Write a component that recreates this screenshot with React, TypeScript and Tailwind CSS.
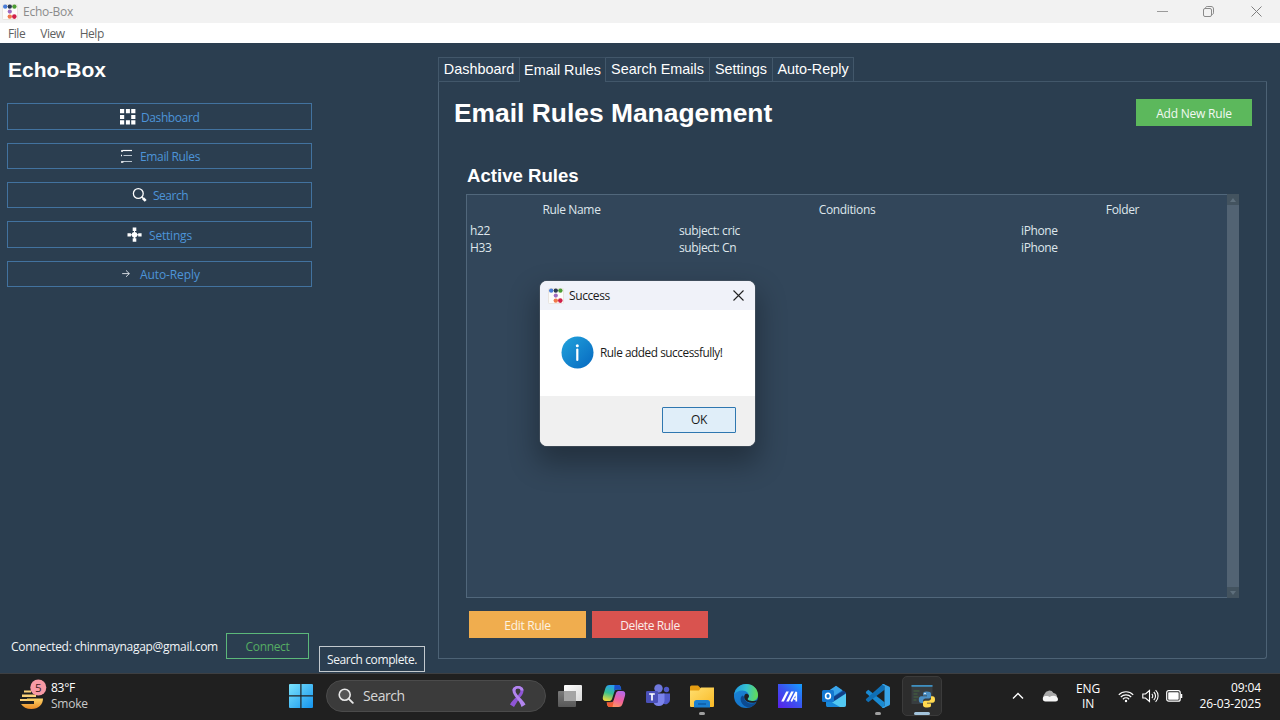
import React from "react";

const UI = "font-['Open_Sans','Noto_Sans',sans-serif]";
const ARIAL = "font-['Liberation_Sans',Arial,sans-serif]";

function AppIcon() {
  return (
    <svg width="16" height="16" viewBox="0 0 16 16" className="block shrink-0">
      <rect x="0.5" y="0.5" width="15" height="15" rx="1" fill="#fdfcfa" stroke="#e4dfda" strokeWidth="0.8" />
      <circle cx="3.2" cy="2.6" r="2.2" fill="#4a7dd8" />
      <circle cx="7.8" cy="2.6" r="2.2" fill="#2b3a50" />
      <circle cx="12.4" cy="2.6" r="2.2" fill="#4d9c34" />
      <circle cx="7.8" cy="7.6" r="2.1" fill="#a06cc0" />
      <circle cx="7.8" cy="12.6" r="2.2" fill="#f0784a" />
      <circle cx="12.3" cy="12.6" r="2.3" fill="#d0204a" />
    </svg>
  );
}

const GridIcon = (
  <svg width="16" height="16" viewBox="0 0 16 16" fill="#fff" className="block">
    <path d="M0 0h4.200v4.200H0zM5.900 0h4v4.200h-4zM11.200 0h4.200v4.200h-4.200zM0 5.900h4.200v4H0zM11.200 5.900h4.200v4h-4.200zM0 11.200h4.200v4.200H0zM5.900 11.200h4v4.200h-4zM11.200 11.200h4.200v4.200h-4.200z" />
  </svg>
);
const ListIcon = (
  <svg width="16" height="16" viewBox="0 0 16 16" className="block">
    <path d="M2.500 2.500h9.500" stroke="#fff" strokeWidth="1.200" />
    <path d="M3.500 7.500h8.500M2.500 13.500h9.500" stroke="#b9c4ce" strokeWidth="1" />
    <path d="M1 3h2M1 7.500h1M1 14h2.400" stroke="#fff" strokeWidth="1.600" />
  </svg>
);
const SearchIcon = (
  <svg width="16" height="16" viewBox="0 0 16 16" fill="none" stroke="#fff" className="block">
    <circle cx="6.300" cy="6.500" r="4.900" strokeWidth="1.300" />
    <path d="M9.600 10l1.600 1.400" strokeWidth="1.400" />
    <path d="M11 11.200l2.700 2.700" strokeWidth="2.700" />
  </svg>
);
const SettingsIcon = (
  <svg width="16" height="16" viewBox="0 0 16 16" fill="#fff" className="block">
    <circle cx="7.500" cy="7.700" r="2.800" />
    <path d="M5.700.6h3.600v3.500H5.700zM5.700 11.200h3.600v3.500H5.700zM.5 6.200h3.400v3.200H.5zM11.200 6.200h3.400v3.200h-3.400zM7 3.500h1v8H7zM3.300 7.200h8v1h-8z" />
  </svg>
);
const ArrowIcon = (
  <svg width="16" height="16" viewBox="0 0 16 16" fill="none" stroke="#e4e9ee" className="block">
    <path d="M2.200 7.600h7.200M6 4.400l3.300 3.200L6 10.800" strokeWidth="0.900" />
  </svg>
);

const nav = [
  { label: "Dashboard", icon: GridIcon, cls: "h-[27px] pl-[112px] gap-[5px]", tr: "tracking-[-0.4px]" },
  { label: "Email Rules", icon: ListIcon, cls: "h-[26px] pl-[112px] gap-[4px]", tr: "tracking-[-0.35px]" },
  { label: "Search", icon: SearchIcon, cls: "h-[26px] pl-[124px] gap-[5px]", tr: "tracking-[-0.5px]" },
  { label: "Settings", icon: SettingsIcon, cls: "h-[27px] pl-[119px] gap-[6px]", tr: "tracking-[-0.2px]" },
  { label: "Auto-Reply", icon: ArrowIcon, cls: "h-[26px] pl-[112px] gap-[4px]", tr: "tracking-[-0.1px]" },
];

function Sidebar() {
  return (
    <aside className="flex w-[438px] shrink-0 flex-col pl-[7px]">
      <h1 className={`mt-[14px] h-[26px] pl-px text-[21px] leading-[26px] font-bold text-white ${ARIAL}`}>Echo-Box</h1>
      <nav className="mt-[20px] flex flex-col gap-[13px]">
        {nav.map((n) => (
          <button key={n.label} className={`flex w-[305px] items-center border border-[#42729f] text-[12px] leading-[16px] text-[#4d94d8] ${n.cls}`}>
            {n.icon}
            <span className={`pt-[2px] ${n.tr}`}>{n.label}</span>
          </button>
        ))}
      </nav>
      <div className="mt-auto flex h-[40px] items-start">
        <span className="w-[219px] pt-[5px] pl-[4px] text-[12px] leading-[17px] tracking-[-0.3px] whitespace-nowrap text-[#f2f5f7]">
          Connected: chinmaynagap@gmail.com
        </span>
        <button className="h-[26px] w-[83px] border border-[#5cb87a] text-[12px] leading-[17px] tracking-[-0.35px] text-[#55ad63]">Connect</button>
        <div className="mt-[13px] ml-[10px] flex h-[26px] w-[106px] items-center justify-center border border-[#c3c9ce] text-[12px] leading-[17px] tracking-[-0.4px] whitespace-nowrap text-[#f2f5f7]">
          Search complete.
        </div>
      </div>
    </aside>
  );
}

const tabs = [
  { label: "Dashboard", w: "w-[82px]", active: false },
  { label: "Email Rules", w: "w-[86px]", active: true },
  { label: "Search Emails", w: "w-[104px]", active: false },
  { label: "Settings", w: "w-[63px]", active: false },
  { label: "Auto-Reply", w: "w-[81px]", active: false },
];

function RulesPanel() {
  return (
    <main className="flex w-[829px] flex-col pt-[14px]">
      <div className={`flex h-[25px] text-[14.400px] text-white ${ARIAL}`}>
        {tabs.map((t) => (
          <div
            key={t.label}
            className={`flex items-center justify-center pt-px whitespace-nowrap ${t.w} ${
              t.active ? "border-t border-r border-t-[#3b4f62] border-r-[#42576a]" : "border-t border-r border-b border-[#42576a] bg-[#2d4154] first:border-l"
            }`}
          >
            {t.label}
          </div>
        ))}
        <div className="flex-1 border-b border-[#42576a]" />
      </div>
      <section className="flex h-[577px] flex-col rounded-br-[3px] border-x border-b border-[#4d6275]">
        <header className="flex h-[61px] items-start justify-between pt-[17px] pr-[14px] pl-[15px]">
          <h2 className={`text-[26.400px] leading-[28px] font-bold text-white ${ARIAL}`}>Email Rules Management</h2>
          <button className="h-[27px] w-[116px] bg-[#5cb85c] pt-px text-[12px] leading-[17px] tracking-[-0.2px] text-[#f2f8f2]">Add New Rule</button>
        </header>
        <h3 className={`mt-[21px] h-[22px] pl-[28px] text-[18.600px] leading-[23px] font-bold text-white ${ARIAL}`}>Active Rules</h3>
        <div className="mt-[8px] ml-[27px] flex h-[404px] w-[773px] text-[12px] text-[#dfe6ec]">
          <div className="min-w-0 flex-1 border-t border-b border-l border-[#51677b] bg-[#32465a] pt-[6px]">
            <div className="grid h-[21px] grid-cols-[209px_342px_209px] text-center leading-[17px] tracking-[-0.350px]">
              <span>Rule Name</span>
              <span>Conditions</span>
              <span>Folder</span>
            </div>
            {[
              ["h22", "subject: cric", "iPhone"],
              ["H33", "subject: Cn", "iPhone"],
            ].map((r) => (
              <div key={r[0]} className="grid h-[17px] grid-cols-[209px_342px_209px] pl-[3px] leading-[17px] tracking-[-0.380px]">
                {r.map((c) => (
                  <span key={c}>{c}</span>
                ))}
              </div>
            ))}
          </div>
          <div className="flex w-[12px] shrink-0 flex-col justify-between bg-[#526373]">
            <div className="flex h-[11px] items-center justify-center bg-[#43535f]">
              <svg width="6" height="4" viewBox="0 0 6 4"><path d="M0 4L3 0l3 4z" fill="#5e6f7c" /></svg>
            </div>
            <div className="flex h-[11px] items-center justify-center bg-[#43535f]">
              <svg width="6" height="4" viewBox="0 0 6 4"><path d="M0 0l3 4 3-4z" fill="#5e6f7c" /></svg>
            </div>
          </div>
        </div>
        <div className="mt-[13px] ml-[30px] flex gap-[6px] text-[12px] leading-[17px]">
          <button className="h-[27px] w-[117px] bg-[#f0ad4e] pt-px tracking-[-0.300px] text-[#fdf3e2]">Edit Rule</button>
          <button className="h-[27px] w-[116px] bg-[#d9534f] pt-px tracking-[-0.400px] text-[#fbeceb]">Delete Rule</button>
        </div>
      </section>
    </main>
  );
}

function Dialog() {
  return (
    <div className="absolute top-[281px] left-[540px] flex h-[165px] w-[215px] flex-col overflow-hidden rounded-[7px] bg-white text-[12px] text-[#1a1a1a] shadow-[0_0_0_1px_rgba(80,90,100,0.5),0_14px_28px_4px_rgba(0,0,0,0.3)]">
      <div className="flex h-[29px] items-center bg-[#f0f2f9] pl-[8px]">
        <AppIcon />
        <span className="ml-[5px] text-[12px] leading-[17px] tracking-[-0.400px]">Success</span>
        <svg width="11" height="11" viewBox="0 0 11 11" className="mr-[11px] ml-auto block" stroke="#222" strokeWidth="1.100">
          <path d="M.5.5l10 10M10.500.5l-10 10" />
        </svg>
      </div>
      <div className="flex flex-1 items-center pb-[2px] pl-[21px]">
        <svg width="33" height="33" viewBox="0 0 33 33" className="block">
          <defs>
            <linearGradient id="info" x1="0" y1="0" x2="1" y2="1">
              <stop offset="0" stopColor="#22a3dc" />
              <stop offset="1" stopColor="#0668c0" />
            </linearGradient>
          </defs>
          <circle cx="16.500" cy="16.500" r="16" fill="url(#info)" />
          <circle cx="16.300" cy="9.700" r="1.500" fill="#fff" />
          <path d="M16.300 13.500v10.500" stroke="#fff" strokeWidth="2.200" strokeLinecap="round" />
        </svg>
        <span className="ml-[6px] text-[11.800px] leading-[17px] tracking-[-0.450px] whitespace-nowrap">Rule added successfully!</span>
      </div>
      <div className="flex h-[50px] justify-end bg-[#f0f0f0] pt-[11px] pr-[19px]">
        <button className="h-[26px] w-[74px] rounded-[1px] border border-[#2f77b0] bg-[#e0eef9] pb-[2px] leading-[17px] tracking-[-0.300px]">OK</button>
      </div>
    </div>
  );
}

const taskIcons = [
  <svg key="tv" width="28" height="28" viewBox="0 0 28 28">
    <defs>
      <linearGradient id="tv1" x1="0" y1="0" x2="1" y2="1"><stop offset="0" stopColor="#fff" /><stop offset="1" stopColor="#d8d8d8" /></linearGradient>
      <linearGradient id="tv2" x1="0" y1="0" x2="0" y2="1"><stop offset="0" stopColor="#7a7a7a" /><stop offset="1" stopColor="#585858" /></linearGradient>
    </defs>
    <rect x="8" y="3" width="18" height="16" rx="1" fill="url(#tv1)" />
    <rect x="2" y="9" width="18" height="16" rx="1" fill="url(#tv2)" />
    <path d="M8 9h12v10H8z" fill="#a4a4a4" />
  </svg>,
  <svg key="cp" width="28" height="28" viewBox="0 0 28 28">
    <defs>
      <linearGradient id="cp1" x1="0.500" y1="0" x2="0.200" y2="1"><stop offset="0" stopColor="#2a9df5" /><stop offset="0.500" stopColor="#35bf90" /><stop offset="1" stopColor="#f5dc3a" /></linearGradient>
      <linearGradient id="cp2" x1="0.700" y1="0" x2="0.300" y2="1"><stop offset="0" stopColor="#b768e8" /><stop offset="0.500" stopColor="#ef5f9f" /><stop offset="1" stopColor="#ff9a5c" /></linearGradient>
    </defs>
    <path d="M9.500 3h8.500c2.300 0 2.700 1.500 3.300 4.500h-4c-2 0-2.600 1-3.200 3l-1.900 6c-.7 2-1.600 2.500-3.600 2.500H6c-2.800 0-3.800-2-3-4.800l2.300-7.700C6.100 4 7.300 3 9.500 3z" fill="url(#cp1)" />
    <path d="M14.500 3H18c2.300 0 2.700 1.500 3.300 4.500h-4.800c-1.200 0-2 .8-2.500 2.500z" fill="#1a50cc" />
    <path d="M18.500 25H10c-2.300 0-2.700-1.500-3.300-4.500h4c2 0 2.600-1 3.200-3l1.900-6C16.500 9.500 17.400 9 19.400 9H22c2.800 0 3.800 2 3 4.800l-2.300 7.700c-.8 2.500-2 3.500-4.200 3.500z" fill="url(#cp2)" />
    <path d="M12.500 25H10c-2.300 0-2.700-1.500-3.300-4.500h4.800c1.200 0 2-.8 2.500-2.500z" fill="#ee5a35" />
  </svg>,
  <svg key="tm" width="28" height="28" viewBox="0 0 28 28">
    <circle cx="14.500" cy="6.500" r="4.200" fill="#6f78dc" />
    <circle cx="22.500" cy="7.500" r="2.700" fill="#5059c9" />
    <path d="M19 11.500h7v6.500a4.500 4.500 0 0 1-7 3.500z" fill="#5059c9" />
    <path d="M9 11.500h11.500V19a5.800 5.800 0 0 1-11.500 0z" fill="#7b83eb" />
    <rect x="2" y="9" width="12" height="12" rx="1.200" fill="#4a50b8" />
    <path d="M5.200 12h5.600M8 12v6.500" stroke="#fff" strokeWidth="1.700" />
  </svg>,
  <svg key="fe" width="28" height="28" viewBox="0 0 28 28">
    <defs><linearGradient id="fe1" x1="0" y1="0" x2="1" y2="1"><stop offset="0" stopColor="#ffdf70" /><stop offset="1" stopColor="#f9b925" /></linearGradient></defs>
    <path d="M2 5a1.500 1.500 0 0 1 1.500-1.500h6.500l2.500 2.500h4v5H2z" fill="#e59d12" />
    <path d="M2 8.500h9l2-3h13v18.500a1 1 0 0 1-1 1H3a1 1 0 0 1-1-1z" fill="url(#fe1)" />
    <path d="M6 25.500v-5a2.500 2.500 0 0 1 2.500-2.500h11a2.500 2.500 0 0 1 2.500 2.500v5z" fill="#1b7fd0" />
    <path d="M10 22h8" stroke="#0f5ba6" strokeWidth="1.500" />
  </svg>,
  <svg key="ed" width="28" height="28" viewBox="0 0 28 28">
    <defs>
      <linearGradient id="ed1" x1="0" y1="0.300" x2="1" y2="0.400"><stop offset="0" stopColor="#1f9ae0" /><stop offset="0.500" stopColor="#35c1d0" /><stop offset="1" stopColor="#63dc55" /></linearGradient>
      <linearGradient id="ed2" x1="0" y1="0" x2="0.500" y2="1"><stop offset="0" stopColor="#1d87d8" /><stop offset="1" stopColor="#1272c8" /></linearGradient>
    </defs>
    <circle cx="14" cy="14" r="12" fill="url(#ed2)" />
    <path d="M2.200 12.500C3.300 6.300 8 2 14.200 2 21 2 26 6.800 26 13c0 3.800-2.700 6-6 6-2.500 0-4.400-.9-4.400-2 0-.9 1.400-1.200 1.400-3.300 0-2.500-2.600-5.300-6.800-5.300-3.700 0-6.500 1.700-8 4.100z" fill="url(#ed1)" />
    <path d="M10.500 13.500c-1.800 1.200-2.300 3.100-1.600 5.500 1 3.500 4.400 6.200 8 6.500 3-.7 5.800-2.400 7.400-4.900-5.500 2.600-12.500-.6-12-5.700z" fill="#0c4a91" />
    <path d="M13.500 12c-2.300 1.800-1.500 5.800 2 7.700 3.300 1.700 7.500 1.500 10.200-.8-.4 1-.8 1.500-1.400 2.200 1.800-2 1.200-2.600.2-2.600-1.300.5-2.800.7-4.500.5-2.500 0-4.400-.9-4.400-2 0-.9 1.400-1.200 1.400-3.300-1-1.800-2.300-2.200-3.500-1.700z" fill="#202020" />
  </svg>,
  <svg key="ma" width="28" height="28" viewBox="0 0 28 28">
    <defs><linearGradient id="ma1" x1="0" y1="1" x2="1" y2="0"><stop offset="0" stopColor="#5b1fe8" /><stop offset="0.500" stopColor="#3b52f0" /><stop offset="1" stopColor="#14a0ff" /></linearGradient></defs>
    <rect x="2" y="2" width="24" height="24" fill="url(#ma1)" />
    <path d="M5.200 19.500h2.600l5-10h-2.600zM10.200 19.500h2.600l5-10h-2.600z" fill="#fff" />
    <path d="M15.200 19.500L20.300 10v9.500M18 17h2.500" fill="none" stroke="#fff" strokeWidth="1.700" />
  </svg>,
  <svg key="ol" width="28" height="28" viewBox="0 0 28 28">
    <path d="M6 12L16 4l10 7v12a2 2 0 0 1-2 2H8a2 2 0 0 1-2-2z" fill="#1267b8" />
    <path d="M9 8.500l7-4.700 6.500 4.500L14 14z" fill="#3aa5ea" />
    <path d="M12 16l12-7.500 2 2.500-11 8z" fill="#123f86" />
    <path d="M26 11.500V23a2 2 0 0 1-2 2H9c-1 0-2-.5-2-1.200z" fill="#52c8f2" />
    <path d="M6 17l14 8H8a2 2 0 0 1-2-2z" fill="#1888d8" />
    <rect x="2" y="8" width="12" height="12" rx="1.500" fill="#1377d0" />
    <ellipse cx="8" cy="14" rx="2.400" ry="2.800" fill="none" stroke="#fff" strokeWidth="1.600" />
  </svg>,
  <svg key="vs" width="28" height="28" viewBox="0 0 28 28">
    <path d="M2 9.800l2.300-2L20.500 20.300V26h-1.700L2.300 11.200c-.5-.5-.5-1-.3-1.400z" fill="#1a8ad2" />
    <path d="M2 18.200l2.300 2L20.500 7.700V2h-1.700L2.300 16.800c-.5.500-.5 1-.3 1.400z" fill="#0f6fb5" />
    <path d="M19.500 2l5.500 2.500c.6.300 1 .8 1 1.500v16c0 .7-.4 1.200-1 1.500L19.500 26c-.5.200-1 0-1.500-.5l2.500-1.500V4L18 2.500c.5-.5 1-.7 1.500-.5z" fill="#38a4e8" />
  </svg>,
  <svg key="py" width="28" height="28" viewBox="0 0 28 28">
    <rect x="3.500" y="3" width="21" height="19" fill="#383d40" />
    <rect x="3.500" y="3" width="21" height="1.800" fill="#3f8fc0" />
    <path d="M5.500 9h6M5.500 12h4M5.500 15h5M5.500 18h3" stroke="#46693f" strokeWidth="1" />
    <g transform="translate(1 -0.500)">
      <path d="M17.500 10c-2.800 0-3.500 1-3.500 2.300V14h4v.8h-5.500c-2 0-2.700 1.500-2.700 3.400 0 2 .8 3.300 2.400 3.300H14v-2c0-1.500 1-2.500 2.500-2.500H20c1.200 0 2-.8 2-2v-2.700c0-1.500-1.500-2.300-4.500-2.300z" fill="#4b8fc4" />
      <path d="M18.500 26c2.800 0 3.500-1 3.500-2.300V22h-4v-.8h5.500c2 0 2.500-1.500 2.500-3.200 0-2-.8-3.200-2.400-3.200H22v2c0 1.500-1 2.400-2.500 2.400H16c-1.200 0-2 .8-2 2v2.500c0 1.500 1.500 2.300 4.500 2.300z" fill="#ffd94f" />
      <circle cx="16" cy="12" r=".8" fill="#fff" />
    </g>
  </svg>,
];

function Taskbar() {
  return (
    <footer className="flex h-[47px] items-center border-t border-[#3d3f42] bg-[#202020] pb-[2px] text-white">
      <div className="flex w-[279px] items-center pl-[18px]">
        <svg width="29" height="34" viewBox="0 0 29 34" className="block">
          <defs><linearGradient id="wx" x1="0" y1="0" x2="0" y2="1"><stop offset="0" stopColor="#fcd468" /><stop offset="1" stopColor="#ea8a24" /></linearGradient></defs>
          <path d="M6 11.500h7v2H6zM4 15.500h14v2.500H4zM2 20h16v2H2z" fill="#fbd27a" />
          <path d="M3 25h13v-3.500H9v-2h16c0 6-4.500 10.500-11.500 10.500C8.500 30 5 28 3 25z" fill="url(#wx)" />
          <circle cx="20.300" cy="8.500" r="8" fill="#f79aa5" />
          <text x="20.300" y="12.700" textAnchor="middle" fontFamily="Open Sans" fontSize="11.500" fill="#3c1a1f">5</text>
        </svg>
        <div className="ml-[4px] text-[12px] leading-[16px] tracking-[-0.250px]">
          <div>83°F</div>
          <div className="text-[#c9c9c9]">Smoke</div>
        </div>
      </div>
      <div className="flex w-[47px] pl-[10px]">
        <svg width="24" height="24" viewBox="0 0 24 24" className="block">
          <defs><linearGradient id="win" x1="0" y1="0" x2="1" y2="1"><stop offset="0" stopColor="#7be3fc" /><stop offset="1" stopColor="#1494ee" /></linearGradient></defs>
          <path d="M0 1a1 1 0 0 1 1-1h10.300v11.300H0zM12.500 0H23a1 1 0 0 1 1 1v10.300H12.500zM0 12.500h11.300V24H1a1 1 0 0 1-1-1zM12.500 12.500H24V23a1 1 0 0 1-1 1H12.500z" fill="url(#win)" />
        </svg>
      </div>
      <div className="flex h-[32px] w-[220px] items-center rounded-full border border-[#4b4b4b] bg-[#3b3b3b] pl-[11px]">
        <svg width="16" height="16" viewBox="0 0 16 16" fill="#555" stroke="#e8e8e8" className="block">
          <circle cx="6.700" cy="6.700" r="5.500" strokeWidth="1.600" />
          <path d="M10.800 10.800l4 4" strokeWidth="1.900" strokeLinecap="round" />
        </svg>
        <span className="ml-[9px] text-[14px] leading-[18px] tracking-[-0.450px] text-[#d6d6d6]">Search</span>
        <svg width="18" height="24" viewBox="0 0 18 24" className="mr-[18px] ml-auto block">
          <path d="M3.500 6.500C3.500.500 14.500.500 14.500 6.500c0 4-3.300 6.500-5.500 10l-4 6.500-4-2.500C3.500 15 11.500 11 11.500 6.500c0-2.600-5-2.600-5 0z" fill="#8f55d6" />
          <path d="M3.500 6.500C3.500.500 14.500.500 14.500 6.500h-3c0-2.600-5-2.600-5 0C6.500 11 14 15 16.500 20.500l-4 2.500C10.500 15.500 3.500 12 3.500 6.500z" fill="#b285ee" />
        </svg>
      </div>
      <div className="ml-[2px] flex">
        {taskIcons.map((ic, i) => (
          <div key={i} className="flex h-[44px] w-[44px] items-center justify-center">
            <div className={`relative flex h-[40px] w-[40px] items-center justify-center rounded-[5px] ${i === 8 ? "border border-[#3b3b3b] bg-[#2d2d2d]" : ""}`}>
              {ic}
              {(i === 3 || i === 7) && <span className="absolute bottom-px left-[17px] h-[3px] w-[6px] rounded-full bg-[#a0a0a0]" />}
              {i === 8 && <span className="absolute bottom-0 left-[11px] h-[3px] w-[16px] rounded-full bg-[#a3c4dc]" />}
            </div>
          </div>
        ))}
      </div>
      <div className="ml-auto flex items-center pr-[19px]">
        <svg width="12" height="8" viewBox="0 0 12 8" fill="none" stroke="#fff" strokeWidth="1.400" className="block"><path d="M1 6.500l5-5 5 5" /></svg>
        <svg width="18" height="12" viewBox="0 0 18 12" className="ml-[17px] block">
          <path d="M4 10a4 4 0 0 1-.5-6A5 5 0 0 1 12.500 3a4 4 0 0 1 3.500 4z" fill="#a9a9a9" />
          <path d="M4.500 11.500a2.700 2.700 0 0 1 0-5.400c2-.3 3 .2 4 .8C12 4.500 17 6 17 9a2.500 2.500 0 0 1-2.500 2.500z" fill="#f6f6f6" />
        </svg>
        <div className="ml-[14px] w-[30px] text-center text-[12px] leading-[15px] tracking-[-0.100px]"><div>ENG</div><div>IN</div></div>
        <svg width="16" height="13" viewBox="0 0 16 13" fill="none" stroke="#fff" strokeWidth="1.200" className="ml-[15px] block">
          <path d="M.8 4.800a10 10 0 0 1 14.400 0M2.800 7a7.300 7.300 0 0 1 10.400 0M4.900 9.200a4.400 4.400 0 0 1 6.200 0" />
          <circle cx="8" cy="11" r="1.200" fill="#fff" stroke="none" />
        </svg>
        <svg width="17" height="14" viewBox="0 0 17 14" fill="none" stroke="#fff" strokeWidth="1.100" className="ml-[8px] block">
          <path d="M.8 5v4h2.700L7.500 12.500v-11L3.500 5zM9.800 4.800a3 3 0 0 1 0 4.400M11.800 3a5.500 5.500 0 0 1 0 8M13.600 1.200a8 8 0 0 1 0 11.600" />
        </svg>
        <svg width="17" height="12" viewBox="0 0 17 12" className="ml-[7px] block">
          <rect x="0.700" y="0.700" width="13.500" height="10.500" rx="2" fill="none" stroke="#fff" strokeWidth="1.200" />
          <rect x="2.200" y="2.200" width="10.500" height="7.500" rx="0.800" fill="#fff" />
          <path d="M15.500 4v4" stroke="#fff" strokeWidth="1.500" />
        </svg>
        <div className="ml-[15px] w-[63px] text-right text-[12px] leading-[16px] tracking-[-0.100px] whitespace-nowrap"><div>09:04</div><div>26-03-2025</div></div>
      </div>
    </footer>
  );
}

export default function App() {
  return (
    <div className={`relative flex h-[720px] w-[1280px] flex-col overflow-hidden bg-[#2b3e50] ${UI}`}>
      <div className="flex h-[23px] items-center bg-[#f2f2f2] pl-[2px]">
        <AppIcon />
        <span className="ml-[5px] text-[12px] leading-[17px] tracking-[-0.250px] text-[#8b8b8b]">Echo-Box</span>
        <div className="mr-[18px] ml-auto flex items-center">
          <svg width="11" height="11" viewBox="0 0 11 11" stroke="#9a9a9a" className="mr-[35px] block"><path d="M0 5.500h11" /></svg>
          <svg width="11" height="11" viewBox="0 0 11 11" fill="none" stroke="#8a8a8a" className="mr-[37px] block">
            <rect x="0.500" y="2.500" width="8" height="8" rx="1.500" /><path d="M2.500 2.300C2.500 1 3.200.5 4.200.5H8c1.600 0 2.500.9 2.500 2.500v3.800c0 1-.5 1.700-1.800 1.700" />
          </svg>
          <svg width="11" height="11" viewBox="0 0 11 11" stroke="#808080" className="block"><path d="M.5.5l10 10M10.500.5l-10 10" /></svg>
        </div>
      </div>
      <div className="flex h-[20px] items-center gap-[15px] bg-white pl-[8px] text-[12px] leading-[17px] tracking-[-0.450px] text-[#5f5f5f]">
        <span>File</span><span>View</span><span>Help</span>
      </div>
      <div className="flex h-[630px]">
        <Sidebar />
        <RulesPanel />
      </div>
      <Taskbar />
      <Dialog />
    </div>
  );
}
